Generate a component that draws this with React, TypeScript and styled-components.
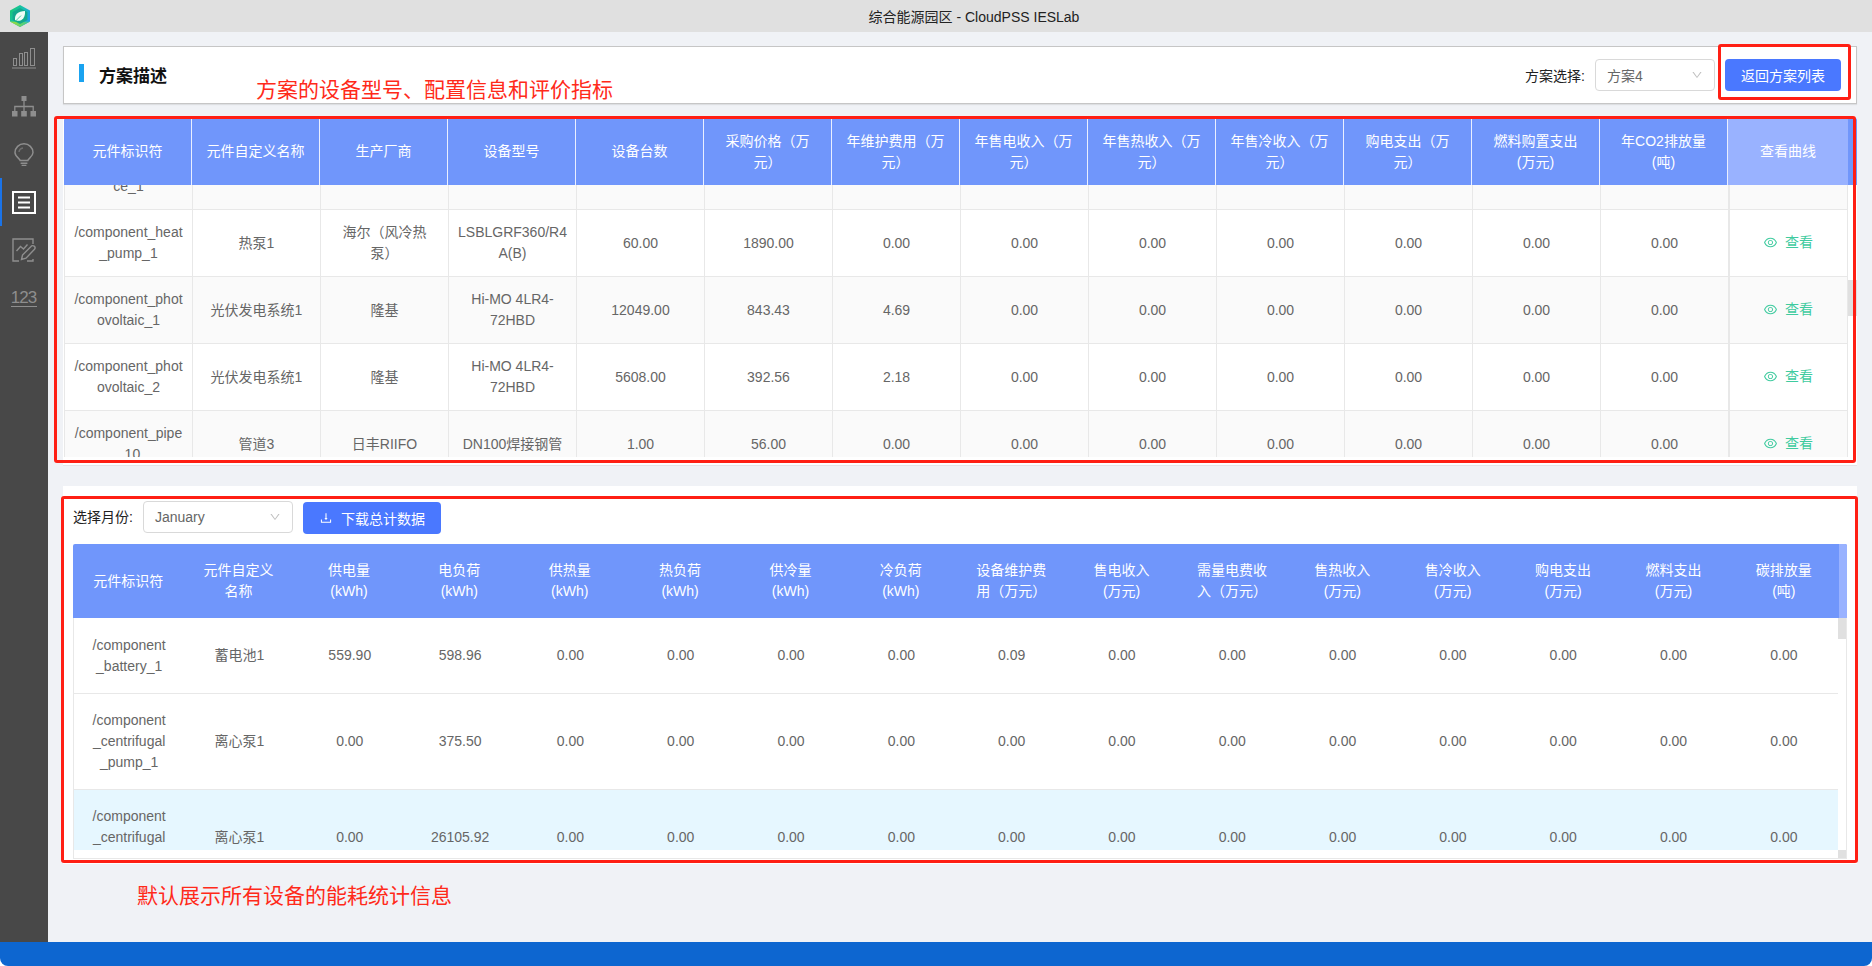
import styled, { createGlobalStyle } from "styled-components";
import { AiOutlineDown, AiOutlineDownload, AiOutlineEye } from "react-icons/ai";

const FONT = `"Liberation Sans", "Noto Sans CJK SC", sans-serif`;
const GRAY = "#8e8e8e";
// full-width brackets, these decide where the header text wraps
const WAN_YUAN = "\uFF08\u4E07\u5143\uFF09";

const GlobalStyle = createGlobalStyle`
  html, body {
    margin: 0;
    padding: 0;
    background: #fff;
  }
  * {
    box-sizing: border-box;
  }
`;

const Page = styled.div`
  position: relative;
  width: 1872px;
  height: 966px;
  display: flex;
  flex-direction: column;
  overflow: hidden;
  font-family: ${FONT};
  font-size: 14px;
`;

const TitleBar = styled.div`
  height: 32px;
  flex-shrink: 0;
  display: flex;
  align-items: center;
  padding-left: 10px;
  background: #e0e0e0;
`;

const WindowTitle = styled.div`
  flex: 1;
  padding-left: 46px;
  text-align: center;
  color: #222;
  font-size: 14px;
`;

const Main = styled.div`
  flex: 1;
  min-height: 0;
  display: flex;
`;

const Sidebar = styled.div`
  width: 48px;
  flex-shrink: 0;
  padding-top: 2px;
  display: flex;
  flex-direction: column;
  background: #484848;
`;

const NavItem = styled.div<{ $active?: boolean }>`
  height: 48px;
  display: flex;
  align-items: center;
  justify-content: center;
  border-left: 2px solid ${(p) => (p.$active ? "#1a73e8" : "transparent")};
  padding-right: 2px;
`;

const NavNumbers = styled.span`
  color: ${GRAY};
  font-size: 17px;
  line-height: 15px;
  letter-spacing: -1px;
  padding: 0 1px 1px 0;
  border-bottom: 1.5px solid ${GRAY};
`;

const Content = styled.div`
  flex: 1;
  min-width: 0;
  padding: 14px 15px 0;
  display: flex;
  flex-direction: column;
  background: #f0f2f6;
`;

const HeaderCard = styled.div`
  height: 58px;
  flex-shrink: 0;
  margin-bottom: -1px;
  display: flex;
  align-items: center;
  padding: 0 15px 0 15px;
  background: #fff;
  border: 1px solid #c6c6c6;
  box-shadow: 0 1px 1px rgba(0, 0, 0, 0.08);
`;

const TitleMark = styled.span`
  width: 5px;
  height: 18px;
  margin: -4px 15px 0 0;
  background: #1aa3f0;
`;

const PageTitle = styled.h1`
  flex: 1;
  margin: -2px 0 0;
  font-size: 17px;
  font-weight: 700;
  color: #111;
`;

const FieldLabel = styled.label`
  color: #222;
  font-size: 14px;
  margin-right: 10px;
`;

const SelectBox = styled.div<{ $width: number }>`
  width: ${(p) => p.$width}px;
  height: 32px;
  display: flex;
  align-items: center;
  justify-content: space-between;
  padding: 0 11px;
  background: #fff;
  border: 1px solid #d9d9d9;
  border-radius: 4px;
  color: #666;
  font-size: 14px;

  svg {
    width: 12px;
    height: 12px;
    color: #bfbfbf;
  }
`;

const PrimaryButton = styled.button`
  height: 32px;
  border: none;
  border-radius: 4px;
  background: #4a78ff;
  color: #fff;
  font-family: ${FONT};
  font-size: 14px;
  display: inline-flex;
  align-items: center;
  justify-content: center;
  gap: 8px;
`;

const BackButton = styled(PrimaryButton)`
  width: 116px;
  margin-left: 10px;
`;

const DownloadButton = styled(PrimaryButton)`
  width: 138px;
  margin: 1px 0 0 10px;
`;

const PlanCard = styled.div`
  height: 348px;
  flex-shrink: 0;
  margin-top: 15px;
  padding-left: 1px;
  background: #fff;
  border-bottom: 1px solid #e4e4e8;
`;

const HeadRow = styled.div<{ $columns: string; $height: number }>`
  display: grid;
  grid-template-columns: ${(p) => p.$columns};
  height: ${(p) => p.$height}px;
  background: #7096fb;
  border-radius: 2px 2px 0 0;
  color: #fff;
`;

const Cell = styled.div`
  display: flex;
  align-items: center;
  justify-content: center;
  text-align: center;
  line-height: 21px;
  overflow-wrap: anywhere;
  white-space: pre-line;
  text-spacing-trim: space-all;
`;

const PlanHeadCell = styled(Cell)`
  padding: 0 8px;
  border-right: 1px solid rgba(255, 255, 255, 0.85);
`;

const FixedHeadCell = styled(Cell)`
  background: #99b2ff;
  border-radius: 0 2px 0 0;
`;

const PlanBodyWrap = styled.div`
  display: flex;
  height: 272px;
`;

const PlanBody = styled.div`
  width: 1784px;
  overflow: hidden;
  border-left: 1px solid #e8e8e8;
`;

const PlanScrolled = styled.div`
  margin-top: -42px;
`;

const PlanRow = styled.div<{ $striped: boolean }>`
  display: grid;
  grid-template-columns: repeat(13, 128px) 119px;
  height: 67px;
  color: #666;
  background: ${(p) => (p.$striped ? "#fafafa" : "#fff")};
`;

const PlanCell = styled(Cell)`
  padding: 0 8px;
  border-right: 1px solid #e8e8e8;
  border-bottom: 1px solid #e8e8e8;
`;

const FixedCell = styled(PlanCell)`
  border-left: 1px solid #e8e8e8;
`;

const ViewLink = styled.a`
  display: inline-flex;
  align-items: center;
  gap: 7px;
  color: #3fcb9f;
  margin: -2px 0 0 -1px;

  svg {
    width: 15px;
    height: 15px;
  }
`;

const ScrollTrack = styled.div<{ $width: number }>`
  width: ${(p) => p.$width}px;
  flex-shrink: 0;
  background: #fff;
`;

const ScrollThumb = styled.div<{ $offset: number; $height: number }>`
  height: ${(p) => p.$height}px;
  margin-top: ${(p) => p.$offset}px;
  background: #e0e0e0;
`;

const StatsCard = styled.div`
  height: 378px;
  flex-shrink: 0;
  margin-top: 20px;
  padding: 15px 10px 5px;
  background: #fff;
`;

const FilterRow = styled.div`
  display: flex;
  align-items: flex-start;
  height: 32px;
  margin-bottom: 11px;
  line-height: 32px;
`;

const DownloadIcon = styled(AiOutlineDownload)`
  width: 14px;
  height: 14px;
`;

const StatsHeadCell = styled(Cell)`
  padding: 0 16px;
`;

const StatsBodyWrap = styled.div`
  display: flex;
  height: 232px;
`;

const StatsBody = styled.div`
  width: 1765px;
  overflow: hidden;
  border-left: 1px solid #e8e8e8;
`;

const StatsRow = styled.div<{ $height: number; $active?: boolean }>`
  display: grid;
  grid-template-columns: repeat(16, 110.3125px);
  height: ${(p) => p.$height}px;
  color: #666;
  background: ${(p) => (p.$active ? "#e6f7ff" : "#fff")};
  border-bottom: 1px solid #e8e8e8;
`;

const StatsCell = styled(Cell)`
  padding: 0 16px;
`;

const StatsTrack = styled(ScrollTrack)`
  border-right: 1px solid #e8e8e8;
`;

const HorizontalTrack = styled.div`
  display: flex;
  justify-content: flex-end;
  height: 9px;
  border: solid #e8e8e8;
  border-width: 0 1px 1px;
  background: #fff;
`;

const TrackCorner = styled.div`
  width: 8px;
  background: #e0e0e0;
`;

const Footer = styled.div`
  height: 24px;
  flex-shrink: 0;
  background: #0d66d0;
  border-radius: 0 0 8px 8px;
`;

// the red markup drawn on top of the screenshot
const Note = styled.div`
  position: absolute;
  color: #ff2a1a;
  font-size: 21px;
  line-height: 28px;
  white-space: nowrap;
`;

const PlanNote = styled(Note)`
  left: 256px;
  top: 76px;
`;

const StatsNote = styled(Note)`
  left: 137px;
  top: 882px;
`;

const MarkBox = styled.div`
  position: absolute;
  border: 3px solid #ff1f14;
  border-radius: 3px;
  pointer-events: none;
`;

const ButtonMark = styled(MarkBox)`
  left: 1718px;
  top: 44px;
  width: 133px;
  height: 56px;
`;

const PlanMark = styled(MarkBox)`
  left: 54px;
  top: 116px;
  width: 1802px;
  height: 347px;
`;

const StatsMark = styled(MarkBox)`
  left: 61px;
  top: 496px;
  width: 1797px;
  height: 367px;
`;

const Logo = () => (
  <svg width="20" height="22" viewBox="0 0 20 22">
    <defs>
      <linearGradient id="logo-fill" x1="0" y1="0" x2="1" y2="0.6">
        <stop offset="0" stopColor="#18c968" />
        <stop offset="0.55" stopColor="#17c0b0" />
        <stop offset="1" stopColor="#1f9fe8" />
      </linearGradient>
      <linearGradient id="logo-low" x1="0" y1="0" x2="1" y2="0">
        <stop offset="0" stopColor="#a8de2c" />
        <stop offset="1" stopColor="#2fc7a0" />
      </linearGradient>
    </defs>
    <polygon points="10,0 20,5.5 20,16.5 10,22 0,16.5 0,5.5" fill="url(#logo-fill)" />
    <polygon points="0,16.5 10,22 20,16.5 10,17" fill="url(#logo-low)" />
    <polygon points="10,3 17.4,7 17.4,15 10,19 2.6,15 2.6,7" fill="#12a98c" />
    <path d="M5 15C4.4 9.5 8 6 15 6 15.6 12.4 12 16.4 7.2 15.8Z" fill="#eefcf6" />
    <path d="M5.6 16 11 10.6" stroke="#4cc9a0" strokeWidth="1" />
  </svg>
);

const BarsIcon = () => (
  <svg width="24" height="21" viewBox="0 0 24 21" fill="none" stroke={GRAY} strokeWidth="1">
    <rect x="1.5" y="10.5" width="3" height="7" />
    <rect x="7.5" y="5.5" width="3" height="12" />
    <rect x="12.5" y="4.5" width="3" height="13" />
    <rect x="18.5" y="0.5" width="4" height="17" />
    <path d="M0 20h24" />
  </svg>
);

const TreeIcon = () => (
  <svg width="24" height="21" viewBox="0 0 24 21" fill={GRAY}>
    <rect x="9.5" y="0" width="5" height="5" />
    <rect x="0" y="15" width="5.5" height="5.5" />
    <rect x="9.2" y="15" width="5.6" height="5.5" />
    <rect x="18.5" y="15" width="5.5" height="5.5" />
    <path d="M12 5v10M2.8 15v-4.5h18.4V15" fill="none" stroke={GRAY} strokeWidth="1.3" />
  </svg>
);

const BulbIcon = () => (
  <svg width="20" height="23" viewBox="0 0 20 23" fill="none" stroke={GRAY} strokeWidth="1.5">
    <path d="M6.2 17.6C6 15.6 1 13.8 1 9.6a9 8.8 0 0 1 18 0c0 4.2-5 6-5.2 8Z" />
    <path d="M6.6 20.2h6.8M7.6 22.4h4.8" />
    <path d="M5 9a5 4.6 0 0 1 4-4" stroke="#6f6f6f" />
  </svg>
);

const ListIcon = () => (
  <svg width="24" height="23" viewBox="0 0 24 23" fill="none" stroke="#fff" strokeWidth="2">
    <rect x="1" y="1" width="22" height="21" />
    <path d="M6 6.5h12M6 11.5h12M6 16.5h12" />
  </svg>
);

const ReportIcon = () => (
  <svg width="24" height="24" viewBox="0 0 24 24" fill="none" stroke={GRAY} strokeWidth="1.4">
    <path d="M21 6V1H1v22h6M15 23h6v-2" />
    <path d="M4.5 13 8.5 8.5l3 2.5 4-4.5" />
    <path d="M9.5 21.5 10.5 17 19 8.5a2 2 0 0 1 3.5 2.8L14 20.2Z" />
  </svg>
);

const planHeaders = [
  "元件标识符",
  "元件自定义名称",
  "生产厂商",
  "设备型号",
  "设备台数",
  "采购价格" + WAN_YUAN,
  "年维护费用" + WAN_YUAN,
  "年售电收入" + WAN_YUAN,
  "年售热收入" + WAN_YUAN,
  "年售冷收入" + WAN_YUAN,
  "购电支出" + WAN_YUAN,
  "燃料购置支出\n(万元)",
  "年CO2排放量\n(吨)",
];

const planRows = [
  ["/component_source_1", "", "", "", "", "", ""],
  ["/component_heat_pump_1", "热泵1", "海尔\uFF08风冷热泵\uFF09", "LSBLGRF360/R4A(B)", "60.00", "1890.00", "0.00"],
  ["/component_photovoltaic_1", "光伏发电系统1", "隆基", "Hi-MO 4LR4-72HBD", "12049.00", "843.43", "4.69"],
  ["/component_photovoltaic_2", "光伏发电系统1", "隆基", "Hi-MO 4LR4-72HBD", "5608.00", "392.56", "2.18"],
  ["/component_pipe_10", "管道3", "日丰RIIFO", "DN100焊接钢管", "1.00", "56.00", "0.00"],
];

const statsHeaders = [
  "元件标识符",
  "元件自定义名称",
  "供电量 (kWh)",
  "电负荷 (kWh)",
  "供热量 (kWh)",
  "热负荷 (kWh)",
  "供冷量 (kWh)",
  "冷负荷 (kWh)",
  "设备维护费用" + WAN_YUAN,
  "售电收入 (万元)",
  "需量电费收入" + WAN_YUAN,
  "售热收入 (万元)",
  "售冷收入 (万元)",
  "购电支出 (万元)",
  "燃料支出 (万元)",
  "碳排放量 (吨)",
];

const statsRows = [
  { height: 76, cells: ["/component_battery_1", "蓄电池1", "559.90", "598.96", "0.00", "0.00", "0.00", "0.00", "0.09"] },
  { height: 96, cells: ["/component_centrifugal_pump_1", "离心泵1", "0.00", "375.50", "0.00", "0.00", "0.00", "0.00", "0.00"] },
  { height: 96, active: true, cells: ["/component_centrifugal_pump_2", "离心泵1", "0.00", "26105.92", "0.00", "0.00", "0.00", "0.00", "0.00"] },
];

const padZeros = (cells: string[], total: number) =>
  cells.concat(Array(total - cells.length).fill("0.00"));

const App = () => {
  return (
    <Page>
      <GlobalStyle />
      <TitleBar>
        <Logo />
        <WindowTitle>综合能源园区 - CloudPSS IESLab</WindowTitle>
      </TitleBar>

      <Main>
        <Sidebar>
          <NavItem><BarsIcon /></NavItem>
          <NavItem><TreeIcon /></NavItem>
          <NavItem><BulbIcon /></NavItem>
          <NavItem $active><ListIcon /></NavItem>
          <NavItem><ReportIcon /></NavItem>
          <NavItem><NavNumbers>123</NavNumbers></NavItem>
        </Sidebar>

        <Content>
          <HeaderCard>
            <TitleMark />
            <PageTitle>方案描述</PageTitle>
            <FieldLabel>方案选择:</FieldLabel>
            <SelectBox $width={120}>
              方案4
              <AiOutlineDown />
            </SelectBox>
            <BackButton>返回方案列表</BackButton>
          </HeaderCard>

          <PlanCard>
            <HeadRow $columns="repeat(13, 128px) 120px 1fr" $height={67}>
              {planHeaders.map((title) => (
                <PlanHeadCell key={title}>{title}</PlanHeadCell>
              ))}
              <FixedHeadCell>查看曲线</FixedHeadCell>
            </HeadRow>
            <PlanBodyWrap>
              <PlanBody>
                <PlanScrolled>
                  {planRows.map((row, index) => (
                    <PlanRow key={"plan-row_" + index} $striped={index % 2 === 0}>
                      {padZeros(row, 13).map((value, i) => (
                        <PlanCell key={i}>{value}</PlanCell>
                      ))}
                      <FixedCell>
                        <ViewLink>
                          <AiOutlineEye />
                          查看
                        </ViewLink>
                      </FixedCell>
                    </PlanRow>
                  ))}
                </PlanScrolled>
              </PlanBody>
              <ScrollTrack $width={9}>
                <ScrollThumb $offset={95} $height={36} />
              </ScrollTrack>
            </PlanBodyWrap>
          </PlanCard>

          <StatsCard>
            <FilterRow>
              <FieldLabel>选择月份:</FieldLabel>
              <SelectBox $width={150}>
                January
                <AiOutlineDown />
              </SelectBox>
              <DownloadButton>
                <DownloadIcon />
                下载总计数据
              </DownloadButton>
            </FilterRow>

            <HeadRow $columns="repeat(16, 110.375px) 8px" $height={74}>
              {statsHeaders.map((title) => (
                <StatsHeadCell key={title}>{title}</StatsHeadCell>
              ))}
              <FixedHeadCell />
            </HeadRow>
            <StatsBodyWrap>
              <StatsBody>
                {statsRows.map((row, index) => (
                  <StatsRow key={"stats-row_" + index} $height={row.height} $active={row.active}>
                    {padZeros(row.cells, 16).map((value, i) => (
                      <StatsCell key={i}>{value}</StatsCell>
                    ))}
                  </StatsRow>
                ))}
              </StatsBody>
              <StatsTrack $width={9}>
                <ScrollThumb $offset={0} $height={21} />
              </StatsTrack>
            </StatsBodyWrap>
            <HorizontalTrack>
              <TrackCorner />
            </HorizontalTrack>
          </StatsCard>
        </Content>
      </Main>

      <Footer />

      <PlanNote>方案的设备型号、配置信息和评价指标</PlanNote>
      <StatsNote>默认展示所有设备的能耗统计信息</StatsNote>
      <ButtonMark />
      <PlanMark />
      <StatsMark />
    </Page>
  );
};

export default App;
